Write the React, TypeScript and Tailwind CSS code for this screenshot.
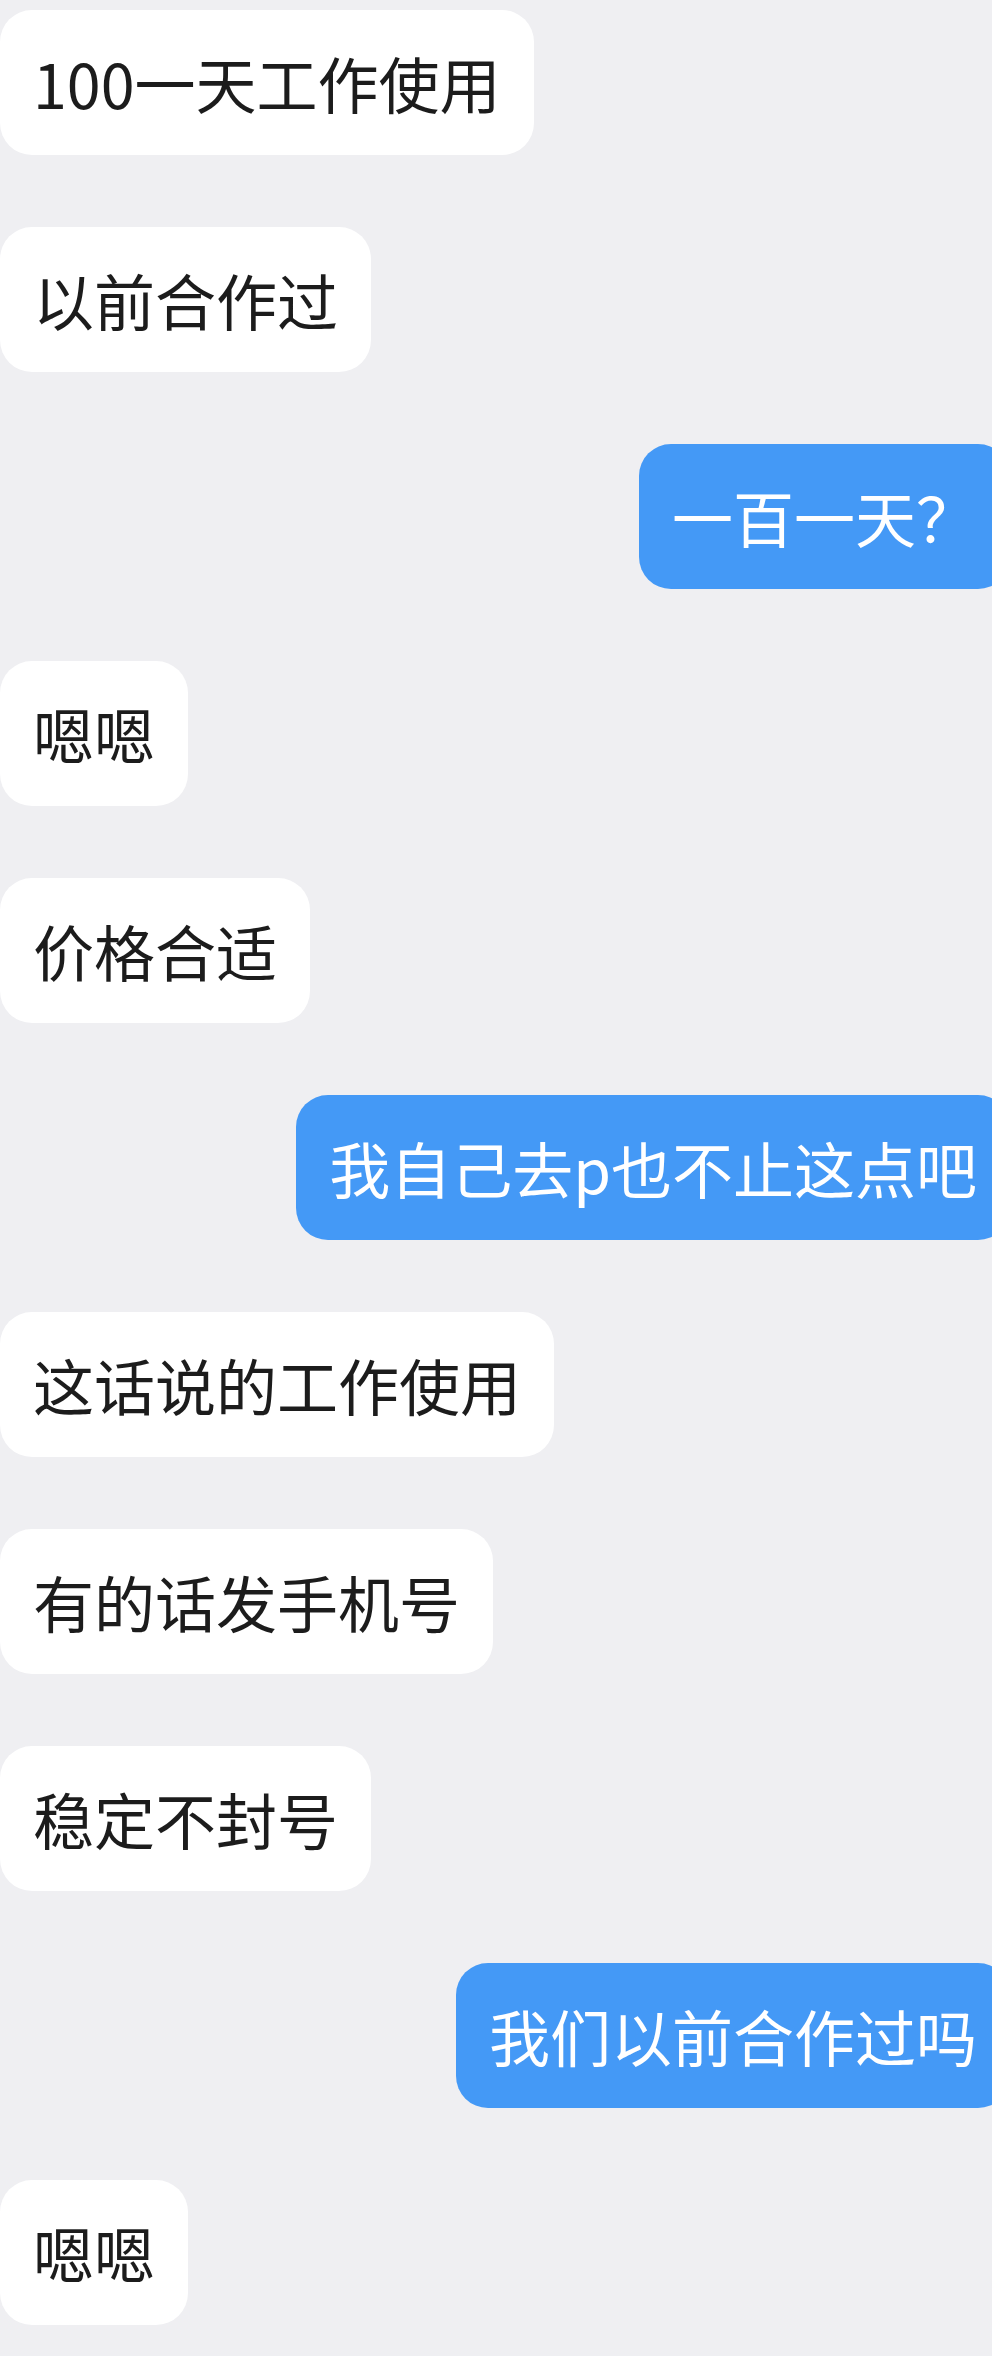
import React from "react";

type Msg = { text: string; me?: boolean };

const messages: Msg[] = [
  { text: "100一天工作使用" },
  { text: "以前合作过" },
  { text: "一百一天？", me: true },
  { text: "嗯嗯" },
  { text: "价格合适" },
  { text: "我自己去p也不止这点吧", me: true },
  { text: "这话说的工作使用" },
  { text: "有的话发手机号" },
  { text: "稳定不封号" },
  { text: "我们以前合作过吗", me: true },
  { text: "嗯嗯" },
];

export default function App() {
  return (
    <div
      className="w-[992px] min-h-[2356px] bg-[#efeff2] overflow-hidden pt-[10px] pb-[31px] flex flex-col gap-[72px]"
      style={{ fontFamily: '"Noto Sans CJK SC", "Noto Sans", sans-serif' }}
    >
      {messages.map((m, i) =>
        m.me ? (
          <div key={i} className="flex justify-end mr-[-18px]">
            <div className="h-[145px] flex items-center pl-[33px] pr-[33px] rounded-[32px] bg-[#4499f6] text-white text-[61px] leading-none whitespace-nowrap">
              {m.text}
            </div>
          </div>
        ) : (
          <div key={i} className="flex justify-start">
            <div className="h-[145px] flex items-center px-[33px] rounded-[32px] bg-white text-[#1c1c1c] text-[61px] leading-none whitespace-nowrap">
              {m.text}
            </div>
          </div>
        )
      )}
    </div>
  );
}
